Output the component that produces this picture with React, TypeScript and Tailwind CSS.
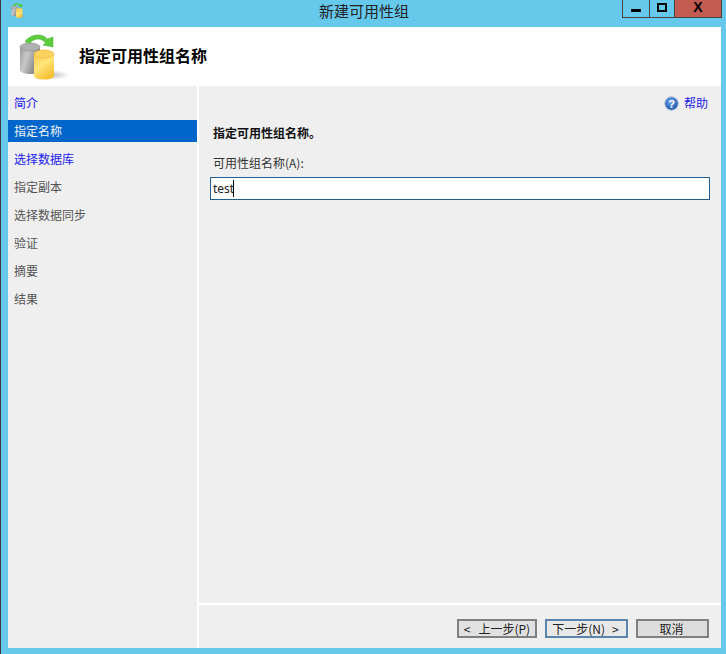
import React from 'react';

const cjk = { fontFamily: '"Noto Sans CJK SC", "Liberation Sans", sans-serif' };

const steps = [
  { label: '简介', state: 'link' },
  { label: '指定名称', state: 'active' },
  { label: '选择数据库', state: 'link' },
  { label: '指定副本', state: 'idle' },
  { label: '选择数据同步', state: 'idle' },
  { label: '验证', state: 'idle' },
  { label: '摘要', state: 'idle' },
  { label: '结果', state: 'idle' },
];

const DbIcon = ({ size, id }: { size: number; id: string }) => (
  <svg width={size} height={size} viewBox="0 0 52 52">
    <defs>
      <linearGradient id={`${id}g`} x1="0" x2="1" y1="0" y2="0.4">
        <stop offset="0" stopColor="#9a9a9a" />
        <stop offset="0.4" stopColor="#c8c8c8" />
        <stop offset="1" stopColor="#7d7d7d" />
      </linearGradient>
      <linearGradient id={`${id}y`} x1="0" x2="0.6" y1="0" y2="1">
        <stop offset="0" stopColor="#f8c94e" />
        <stop offset="0.5" stopColor="#ffe57a" />
        <stop offset="1" stopColor="#f7c035" />
      </linearGradient>
      <radialGradient id={`${id}s`}>
        <stop offset="0" stopColor="#888888" stopOpacity="0.55" />
        <stop offset="1" stopColor="#999999" stopOpacity="0" />
      </radialGradient>
    </defs>
    <ellipse cx="33" cy="44" rx="18" ry="5" fill={`url(#${id}s)`} />
    <path d="M1 16v23c0 2 4 4 10 4s10-2 10-4V16z" fill={`url(#${id}g)`} />
    <ellipse cx="11" cy="16" rx="10" ry="4" fill="#b0b0b0" stroke="#8f8f8f" strokeWidth="0.6" />
    <path d="M15 23v22c0 2 4 3.500 10 3.500s10-1.500 10-3.500V23z" fill={`url(#${id}y)`} />
    <ellipse cx="25" cy="23" rx="10" ry="4" fill="#fbd25e" stroke="#efb033" strokeWidth="0.6" />
    <path d="M6 11C9 6 14 4 19 4C23 4 26 5 28 8L34 6V16L24 14L26.500 12C24 9 22 8 19 8C16 8 14 9 11 12Z" fill="#5ccb3c" stroke="#45ad2e" strokeWidth="0.5" />
  </svg>
);

const Button = ({ children, className = '' }: { children: React.ReactNode; className?: string }) => (
  <button className={`flex h-[19px] items-center justify-center border-2 text-[12px] leading-none text-[#222222] ${className}`}>
    {children}
  </button>
);

export default function App() {
  return (
    <div className="flex h-[654px] w-[726px] flex-col overflow-hidden border-l border-l-[#3c3c3c] bg-[#66c9ec]" style={cjk}>
      {/* Title bar */}
      <div className="relative flex h-[27px] shrink-0 items-start pl-[10px] pt-[2px]">
        <DbIcon size={17} id="small" />
        <div className="absolute left-[273px] top-[1px] w-[180px] text-center text-[15px] leading-[20px] text-[#222222]">新建可用性组</div>
        <div className="ml-auto mr-[4px] mt-[-2px] flex h-[18px] border border-t-0 border-[#444444]">
          <div className="flex w-[27px] items-center justify-center border-r border-[#444444]">
            <div className="mt-[3px] h-[3px] w-[10px] bg-black" />
          </div>
          <div className="flex w-[25px] items-center justify-center border-r border-[#444444]">
            <div className="mb-[3px] h-[9px] w-[10px] border-2 border-black" />
          </div>
          <div className="flex w-[46px] items-center justify-center bg-[#c35c50] pb-[3px] text-[14px] font-bold leading-none text-black" style={{ fontFamily: '"Liberation Sans", sans-serif' }}>
            X
          </div>
        </div>
      </div>

      <div className="ml-[7px] mr-[5px] flex min-h-0 flex-1 flex-col">
        {/* Header */}
        <div className="flex h-[59px] shrink-0 items-center bg-white pl-[11px]">
          <DbIcon size={52} id="big" />
          <h1 className="ml-[8px] mt-[-4px] text-[16px] font-bold leading-none text-black">指定可用性组名称</h1>
        </div>

        <div className="flex min-h-0 flex-1">
          {/* Steps */}
          <nav className="flex w-[189px] shrink-0 flex-col gap-[6px] bg-[#efefef] pt-[6px]">
            {steps.map((s) => (
              <div
                key={s.label}
                className={`flex h-[22px] items-center pl-[6px] text-[12px] leading-none ${
                  s.state === 'active' ? 'bg-[#0066cc] text-[#f4f4f4]' : s.state === 'link' ? 'text-[#1a1aee]' : 'text-[#555555]'
                }`}
              >
                {s.label}
              </div>
            ))}
          </nav>

          <div className="w-[2px] shrink-0 bg-white" />

          {/* Main panel */}
          <main className="flex min-w-0 flex-1 flex-col bg-[#efefef]">
            <div className="flex-1 px-[11px]">
              <div className="flex h-[34px] items-center justify-end pr-[2px]">
                <svg width="15" height="15" viewBox="0 0 15 15" className="mr-[5px]">
                  <defs>
                    <radialGradient id="help" cx="0.45" cy="0.35" r="0.7">
                      <stop offset="0" stopColor="#6aa5e8" />
                      <stop offset="1" stopColor="#1b4fa8" />
                    </radialGradient>
                  </defs>
                  <circle cx="7.500" cy="7.500" r="6.800" fill="url(#help)" stroke="#b9c6d8" strokeWidth="1" />
                  <text x="7.500" y="11.500" textAnchor="middle" fontSize="11" fontWeight="700" fill="#ffffff" fontFamily="Liberation Sans">?</text>
                </svg>
                <span className="text-[12px] leading-none text-[#1a1aee]">帮助</span>
              </div>
              <p className="mt-[5px] pl-[3px] text-[12px] font-bold leading-[16px] text-[#111111]">指定可用性组名称。</p>
              <label className="mt-[14px] block pl-[3px] text-[12px] leading-[16px] text-[#333333]">可用性组名称(A):</label>
              <div className="mt-[6px] flex h-[23px] w-[500px] items-center border border-[#1f5f92] bg-white pl-[2px] text-[12px] leading-none text-[#222222]">
                <span style={{ fontFamily: '"Noto Sans", sans-serif' }}>test</span>
                <span className="ml-[-1px] h-[17px] w-px bg-black" />
              </div>
            </div>

            {/* Footer */}
            <div className="flex h-[45px] shrink-0 items-start justify-end gap-[8px] border-t-2 border-t-white pr-[12px] pt-[14px]">
              <Button className="w-[80px] gap-[8px] border-[#808080] bg-[#e1e1e1]">
                <span>&lt;</span>
                <span>上一步(P)</span>
              </Button>
              <Button className="w-[83px] gap-[7px] border-[#5a86ad] bg-[#e8e8e8] pr-[2px]">
                <span>下一步(N)</span>
                <span>&gt;</span>
              </Button>
              <Button className="w-[73px] border-[#808080] bg-[#dddddd] pr-[2px]">取消</Button>
            </div>
          </main>
        </div>
      </div>
      <div className="h-[6px] shrink-0" />
    </div>
  );
}
